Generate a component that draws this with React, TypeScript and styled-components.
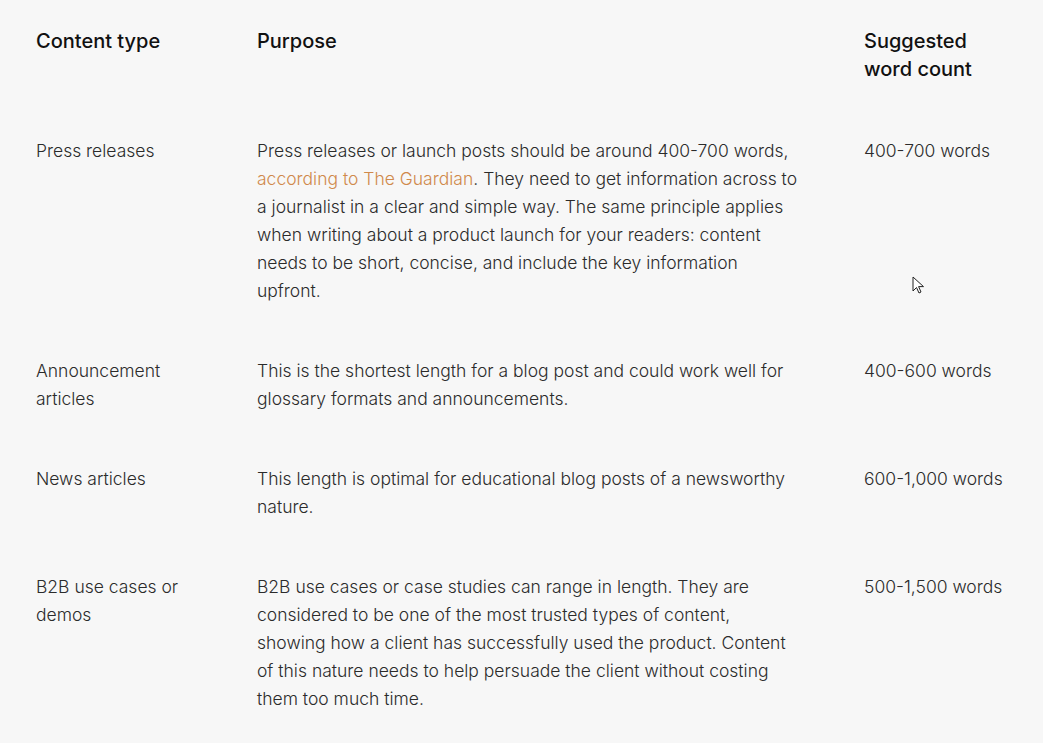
import React from "react";
import styled, { createGlobalStyle } from "styled-components";

const Global = createGlobalStyle`
  html, body { margin: 0; padding: 0; background: #f7f7f7; }
  body { font-family: Inter, "Noto Sans", sans-serif; -webkit-font-smoothing: antialiased; }
`;

const Page = styled.div`
  position: relative;
  width: 1043px;
  min-height: 743px;
  box-sizing: border-box;
  background: #f7f7f7;
  padding: 1px 36px 0 36px;
`;

const Table = styled.div`
  display: grid;
  grid-template-columns: 221px 607px 143px;
`;

const HeadCell = styled.div<{ $pr: number }>`
  padding: 26px ${(p) => p.$pr}px 28px 0;
  font-size: 20px;
  font-weight: 500;
  line-height: 28px;
  color: #111111;
`;

const Cell = styled.div<{ $pr: number }>`
  padding: 26px ${(p) => p.$pr}px 26px 0;
  font-size: 17.5px;
  font-weight: 300;
  line-height: 28px;
  color: #2b2b2b;
`;

const Link = styled.a`
  color: #d0894b;
  text-decoration: none;
`;

const Cursor = styled.svg`
  position: absolute;
  left: 912px;
  top: 276px;
`;

const pads = [36, 62, 0];

const rows: { type: string; purpose: React.ReactNode; count: string }[] = [
  {
    type: "Press releases",
    purpose: (
      <>
        Press releases or launch posts should be around 400-700 words,{" "}
        <Link href="#">according to The Guardian</Link>. They need to get information across to a
        journalist in a clear and simple way. The same principle applies when writing about a
        product launch for your readers: content needs to be short, concise, and include the key
        information upfront.
      </>
    ),
    count: "400-700 words",
  },
  {
    type: "Announcement articles",
    purpose:
      "This is the shortest length for a blog post and could work well for glossary formats and announcements.",
    count: "400-600 words",
  },
  {
    type: "News articles",
    purpose: "This length is optimal for educational blog posts of a newsworthy nature.",
    count: "600-1,000 words",
  },
  {
    type: "B2B use cases or demos",
    purpose:
      "B2B use cases or case studies can range in length. They are considered to be one of the most trusted types of content, showing how a client has successfully used the product. Content of this nature needs to help persuade the client without costing them too much time.",
    count: "500-1,500 words",
  },
];

export default function App() {
  return (
    <>
      <Global />
      <Page>
        <Table>
          <HeadCell $pr={pads[0]}>Content type</HeadCell>
          <HeadCell $pr={pads[1]}>Purpose</HeadCell>
          <HeadCell $pr={pads[2]}>Suggested word count</HeadCell>
          {rows.map((r) => (
            <React.Fragment key={r.type}>
              <Cell $pr={pads[0]}>{r.type}</Cell>
              <Cell $pr={pads[1]}>{r.purpose}</Cell>
              <Cell $pr={pads[2]}>{r.count}</Cell>
            </React.Fragment>
          ))}
        </Table>
        <Cursor width="13" height="19" viewBox="0 0 13 19">
          <path d="M1 1 L1 15 L4.5 11.5 L7 17 L9 16 L6.6 10.6 L11.5 10.6 Z" fill="#fff" stroke="#222" strokeWidth="1" strokeLinejoin="miter" />
        </Cursor>
      </Page>
    </>
  );
}
